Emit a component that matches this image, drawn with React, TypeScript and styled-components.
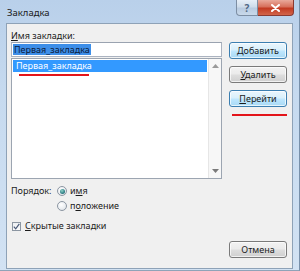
import React from 'react';
import styled, { createGlobalStyle } from 'styled-components';

const Global = createGlobalStyle`
  html, body { margin: 0; padding: 0; background: #fff; }
  body { font-family: "Noto Sans", "Open Sans", sans-serif; }
  #root { width: 300px; height: 271px; }
`;

const Window = styled.div`
  width: 300px;
  height: 271px;
  box-sizing: border-box;
  display: flex;
  flex-direction: column;
  padding: 0 6px 1px 6px;
  background: linear-gradient(180deg, #b9d0ea 0%, #c6daef 35%, #d2e2f3 100%);
  border-right: 1px solid #7890aa;
  border-bottom: 1px solid #8fa3b8;
  font-size: 9px;
  line-height: 12px;
  color: #1b1b1b;
`;

const TitleBar = styled.div`
  height: 23px;
  display: flex;
  align-items: flex-start;
  justify-content: space-between;
  flex: none;
`;

const Title = styled.span`
  padding: 7px 0 0 1px;
  font-size: 9.5px;
  line-height: 12px;
  color: #1a1a1a;
`;

const Controls = styled.div`
  display: flex;
  margin-right: -1px;
`;

const CtrlButton = styled.div<{ $close?: boolean }>`
  height: 16px;
  width: ${p => (p.$close ? 36 : 22)}px;
  box-sizing: border-box;
  display: flex;
  align-items: center;
  justify-content: center;
  border: 1px solid ${p => (p.$close ? '#8a3a32' : '#7d8ea3')};
  border-top: none;
  border-radius: ${p => (p.$close ? '0 0 4px 0' : '0 0 0 4px')};
  ${p => (p.$close ? 'border-left: none;' : '')}
  background: ${p =>
    p.$close
      ? 'linear-gradient(180deg, #e9a99b 0%, #d7705c 45%, #c23a22 55%, #d2654a 100%)'
      : 'linear-gradient(180deg, #e6eef7 0%, #cfdcea 45%, #b9cbe0 55%, #c9d9ea 100%)'};
  color: ${p => (p.$close ? '#fff' : '#4f6684')};
  font-size: 10px;
  font-weight: bold;
  line-height: 1;
`;

const Client = styled.div`
  flex: 1;
  min-height: 0;
  background: #f0f0f0;
  border: 1px solid #8ea2b7;
  display: flex;
  gap: 7px;
  padding: 5px 5px 10px 4px;
`;

const LeftCol = styled.div`
  flex: 1;
  display: flex;
  flex-direction: column;
  min-width: 0;
`;

const RightCol = styled.div`
  width: 58px;
  flex: none;
  display: flex;
  flex-direction: column;
  padding-top: 13px;
  gap: 7px;
`;

const Label = styled.div`
  line-height: 13px;
  height: 13px;
`;

const Key = styled.span`
  text-decoration: underline;
  text-underline-offset: 1px;
`;

const TextField = styled.div`
  height: 15px;
  flex: none;
  box-sizing: border-box;
  border: 1px solid #abb3c0;
  border-top-color: #9aa3b0;
  background: #fff;
  padding: 1px 1px;
  display: flex;
  align-items: center;
`;

const Selection = styled.span`
  background: #3d8ee8;
  color: #0c1a3a;
  line-height: 11px;
  padding: 0 1px;
`;

const ListBox = styled.div`
  margin-top: 1px;
  height: 121px;
  flex: none;
  box-sizing: border-box;
  border: 1px solid #9ca5b1;
  background: #fff;
  display: flex;
`;

const Items = styled.div`
  flex: 1;
  padding: 1px 1px 0 1px;
  display: flex;
  flex-direction: column;
  gap: 2px;
`;

const Item = styled.div<{ $selected?: boolean }>`
  height: 12px;
  line-height: 12px;
  padding-left: 3px;
  background: ${p => (p.$selected ? '#3399ff' : 'transparent')};
  color: ${p => (p.$selected ? '#fff' : '#1b1b1b')};
`;

const RedMark = styled.div<{ $w: number; $ml: number }>`
  height: 2px;
  flex: none;
  background: #e3141a;
  width: ${p => p.$w}px;
  margin-left: ${p => p.$ml}px;
`;

const ScrollBar = styled.div`
  width: 12px;
  border-left: 1px solid #e6e6e6;
  background: #f7f7f7;
  display: flex;
  flex-direction: column;
  justify-content: space-between;
  align-items: center;
  padding: 5px 0 5px;
`;

const Arrow = styled.svg`
  display: block;
`;

const OrderGrid = styled.div`
  margin-top: 5px;
  display: grid;
  grid-template-columns: 46px auto;
  grid-auto-rows: 14px;
  row-gap: 1px;
  align-items: center;
`;

const RadioLine = styled.div`
  display: flex;
  align-items: center;
  gap: 3px;
  height: 14px;
`;

const RadioDot = styled.span<{ $on?: boolean }>`
  width: 10px;
  height: 10px;
  box-sizing: border-box;
  border-radius: 50%;
  border: 1px solid #8c96a2;
  background: radial-gradient(circle at 40% 35%, #ffffff 0%, #e9ecf0 60%, #d5d9de 100%);
  display: flex;
  align-items: center;
  justify-content: center;
  &::after {
    content: '';
    display: ${p => (p.$on ? 'block' : 'none')};
    width: 5px;
    height: 5px;
    border-radius: 50%;
    background: radial-gradient(circle at 40% 35%, #8fd3c9 0%, #2f7f86 60%, #1d5e6a 100%);
  }
`;

const CheckLine = styled.div`
  margin-top: 6px;
  margin-left: 1px;
  display: flex;
  align-items: center;
  gap: 4px;
  height: 14px;
`;

const CheckBox = styled.span`
  width: 9px;
  height: 9px;
  box-sizing: border-box;
  border: 1px solid #8c96a2;
  background: linear-gradient(180deg, #eef0f3, #fbfbfb);
  display: flex;
  align-items: center;
  justify-content: center;
`;

const Button = styled.div<{ $accent?: boolean }>`
  height: 17px;
  flex: none;
  box-sizing: border-box;
  border: 1px solid ${p => (p.$accent ? '#3c7fb1' : '#7a7a7a')};
  border-radius: 3px;
  background: ${p =>
    p.$accent
      ? 'linear-gradient(180deg, #eaf6fd 0%, #d9f0fc 45%, #bee6fd 55%, #a7d9f5 100%)'
      : 'linear-gradient(180deg, #f2f2f2 0%, #ebebeb 45%, #dddddd 55%, #cfcfcf 100%)'};
  box-shadow: inset 0 0 0 1px rgba(255, 255, 255, 0.7);
  display: flex;
  align-items: center;
  justify-content: center;
  font-size: 9px;
  line-height: 12px;
  color: #1b1b1b;
`;

const Spacer = styled.div`
  flex: 1;
`;

const UpArrow = () => (
  <Arrow width="7" height="4" viewBox="0 0 7 4">
    <path d="M0 4 L3.5 0 L7 4 Z" fill="#9a9a9a" />
  </Arrow>
);
const DownArrow = () => (
  <Arrow width="7" height="4" viewBox="0 0 7 4">
    <path d="M0 0 L3.5 4 L7 0 Z" fill="#7a7a7a" />
  </Arrow>
);

export default function App() {
  return (
    <>
      <Global />
      <Window>
        <TitleBar>
          <Title>Закладка</Title>
          <Controls>
            <CtrlButton>?</CtrlButton>
            <CtrlButton $close>
              <svg width="9" height="8" viewBox="0 0 9 8">
                <path d="M1 1 L8 7 M8 1 L1 7" stroke="#fff" strokeWidth="2" strokeLinecap="round" />
              </svg>
            </CtrlButton>
          </Controls>
        </TitleBar>
        <Client>
          <LeftCol>
            <Label>
              <Key>И</Key>мя закладки:
            </Label>
            <TextField>
              <Selection>Первая_закладка</Selection>
            </TextField>
            <ListBox>
              <Items>
                <Item $selected>Первая_закладка</Item>
                <RedMark $w={70} $ml={6} />
              </Items>
              <ScrollBar>
                <UpArrow />
                <DownArrow />
              </ScrollBar>
            </ListBox>
            <OrderGrid>
              <span>Порядок:</span>
              <RadioLine>
                <RadioDot $on />
                <span>и<Key>м</Key>я</span>
              </RadioLine>
              <span />
              <RadioLine>
                <RadioDot />
                <span>п<Key>о</Key>ложение</span>
              </RadioLine>
            </OrderGrid>
            <CheckLine>
              <CheckBox>
                <svg width="7" height="7" viewBox="0 0 7 7">
                  <path d="M0.8 3.6 L2.7 5.8 L6.3 0.8" stroke="#4a5a78" strokeWidth="1.2" fill="none" />
                </svg>
              </CheckBox>
              <span>
                <Key>С</Key>крытые закладки
              </span>
            </CheckLine>
          </LeftCol>
          <RightCol>
            <Button $accent>
              <span><Key>Д</Key>обавить</span>
            </Button>
            <Button>
              <span><Key>У</Key>далить</span>
            </Button>
            <Button $accent>
              <span><Key>П</Key>ерейти</span>
            </Button>
            <RedMark $w={55} $ml={3} />
            <Spacer />
            <Button>Отмена</Button>
          </RightCol>
        </Client>
      </Window>
    </>
  );
}
